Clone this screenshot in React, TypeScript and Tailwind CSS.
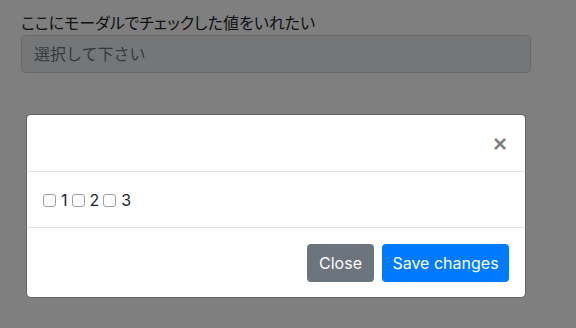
import React from "react";

export default function App() {
  const font = { fontFamily: 'Inter, "Noto Sans CJK JP", sans-serif' };
  return (
    <div className="relative w-[576px] h-[328px] overflow-hidden bg-white" style={font}>
      <div className="pl-[21px] pr-[45px] pt-[11px]">
        <label className="block text-[16px] leading-[24px] text-[#212529] [font-feature-settings:'palt']">
          ここにモーダルでチェックした値をいれたい
        </label>
        <div className="h-[38px] w-[510px] rounded-[4px] border border-[#ced4da] bg-[#e9ecef] px-[12px] flex items-center text-[16px] text-[#6c757d]">
          選択して下さい
        </div>
      </div>

      <div className="absolute inset-0 bg-black/50" />

      <div className="absolute left-[26px] top-[114px] w-[500px] rounded-[5px] border border-black/20 bg-white bg-clip-padding">
        <div className="h-[57px] border-b border-[#dee2e6] flex items-center justify-end pr-[18px]">
          <span className="text-[24px] font-bold leading-none text-black/50 mt-[1px]" style={{ fontFamily: '"Liberation Sans", Arial, sans-serif' }}>
            ×
          </span>
        </div>
        <div className="h-[56px] border-b border-[#dee2e6] flex items-center pl-[16px] text-[16px] text-[#212529]">
          {["1", "2", "3"].map((n) => (
            <label key={n} className="flex items-center mr-[4px]">
              <input
                type="checkbox"
                className="appearance-none w-[13px] h-[13px] rounded-[3px] border border-[#a0a0a0] bg-white mr-[5px] mt-[2px]"
              />
              <span className="leading-[24px]">{n}</span>
            </label>
          ))}
        </div>
        <div className="h-[69px] flex items-center justify-end pr-[16px] gap-[8px]">
          <button className="h-[38px] w-[67px] rounded-[4px] bg-[#6c757d] text-white text-[16px] leading-[24px]">
            Close
          </button>
          <button className="h-[38px] w-[127px] rounded-[4px] bg-[#007bff] text-white text-[16px] leading-[24px]">
            Save changes
          </button>
        </div>
      </div>
    </div>
  );
}
